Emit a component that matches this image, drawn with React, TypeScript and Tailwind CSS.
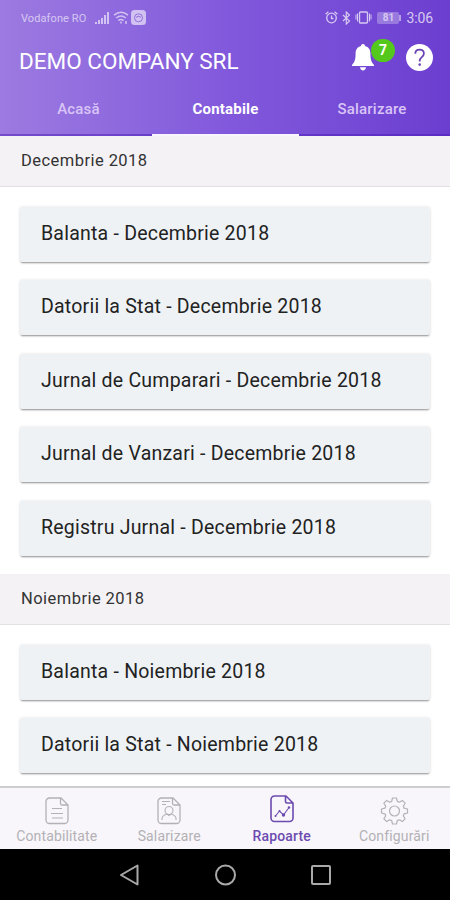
import React, { useState } from 'react';

interface ReportGroup {
  month: string;
  reports: string[];
}

const GROUPS: ReportGroup[] = [
  {
    month: 'Decembrie 2018',
    reports: ['Balanta', 'Datorii la Stat', 'Jurnal de Cumparari', 'Jurnal de Vanzari', 'Registru Jurnal'],
  },
  {
    month: 'Noiembrie 2018',
    reports: ['Balanta', 'Datorii la Stat'],
  },
];

const TOP_TABS = [
  { label: 'Acasă', pad: 'pl-[5px]' },
  { label: 'Contabile', pad: '' },
  { label: 'Salarizare', pad: 'pr-[5px]' },
];

const StatusBar: React.FC = () => (
  <div className="flex h-[35px] items-center justify-between pr-[17px] pl-[21px] text-white">
    <div className="flex items-center opacity-60">
      <span className="w-[74px] pt-[3px] text-[11px] leading-[14px] tracking-[0.1px] whitespace-nowrap">Vodafone RO</span>
      <svg width="15" height="14" viewBox="0 0 15 14" fill="currentColor">
        <path d="M0 11h2v2H0zM3 9h2v4H3zM6 7h2v6H6zM9 4h2v9H9zM12 1h2v12h-2z" />
      </svg>
      <svg className="ml-[3px]" width="16" height="14" viewBox="0 0 16 14" fill="none" stroke="currentColor" strokeWidth="1.5">
        <path d="M1 4.2Q8-1.6 15 4.2M3.2 7Q8 3 12.8 7M5.4 9.6Q8 7.6 10.6 9.6" />
        <path d="M8 10.5v2M13 10v3" />
      </svg>
      <svg className="ml-[2px]" width="15" height="15" viewBox="0 0 15 15">
        <rect width="15" height="15" rx="3.5" fill="currentColor" />
        <circle cx="7.5" cy="7.8" r="4" fill="none" stroke="#8d67d8" strokeWidth="0.9" />
        <path d="M5.2 7.2q2.3-1.8 4.6 0" fill="none" stroke="#8d67d8" />
      </svg>
    </div>
    <div className="flex items-center opacity-70">
      <svg width="13" height="13" viewBox="0 0 13 13" fill="none" stroke="currentColor" strokeWidth="1.3">
        <circle cx="6.5" cy="7" r="4.8" />
        <path d="M6.5 4.5V7.5H8.5M.6 3.2 3.4.8M12.4 3.2 9.6.8" />
      </svg>
      <svg className="ml-1" width="9" height="14" viewBox="0 0 9 14" fill="none" stroke="currentColor" strokeWidth="1.2">
        <path d="M1 4l6.5 6L4.3 13V1l3.2 3L1 10" />
      </svg>
      <svg className="ml-1" width="17" height="13" viewBox="0 0 17 13" fill="none" stroke="currentColor" strokeWidth="1.4">
        <rect x="4.5" y="1" width="8" height="11" rx="1" />
        <path d="M1 3.5v5M2.5 2.5v8M14.5 2.5v8M16 3.5v5" strokeWidth="1" />
      </svg>
      <span className="ml-[5px] flex h-[12px] w-[22px] items-center justify-center rounded-[2px] bg-white/40 text-[10px] leading-none font-bold">
        81
      </span>
      <span className="h-[6px] w-[2px] bg-white/70" />
      <span className="ml-[5px] text-[14px] leading-none tracking-[-0.1px]">3:06</span>
    </div>
  </div>
);

const BellIcon: React.FC = () => (
  <svg width="22" height="27" viewBox="0 0 22 27" fill="currentColor">
    <path d="M11 0c-1.3 0-2 .8-2 1.9C5.3 2.7 3.6 5.6 3.6 9.5c0 5.5-.8 8.5-3.6 11.5V22h22v-1c-2.8-3-3.6-6-3.6-11.5 0-3.9-1.7-6.8-5.4-7.6C13 .8 12.3 0 11 0z" />
    <path d="M8 23.2h6c-.2 2-1.4 3.2-3 3.2s-2.8-1.2-3-3.2z" />
  </svg>
);

const HelpIcon: React.FC = () => (
  <svg width="27" height="27" viewBox="0 0 27 27">
    <circle cx="13.5" cy="13.5" r="13.5" fill="#fff" />
    <path d="M9.3 9.8c0-2.6 1.8-4.2 4.3-4.2s4.3 1.5 4.3 3.9c0 3.5-4.2 3.7-4.2 7.3v.7" fill="none" stroke="#6a43b5" strokeWidth="1.8" />
    <circle cx="13.7" cy="20.6" r="1.3" fill="#6a43b5" />
  </svg>
);

const PageOutline = () => (
  <path d="M4.5 1H16L23 8V23a3.5 3.5 0 0 1-3.5 3.5h-15A3.5 3.5 0 0 1 1 23V4.5A3.5 3.5 0 0 1 4.5 1zM15.5 1v5.5A1.5 1.5 0 0 0 17 8h6" />
);

const DocumentIcon = () => (
  <svg width="24" height="28" viewBox="0 0 24 28" fill="none" stroke="currentColor" strokeWidth="1.3">
    <PageOutline />
    <path d="M7 11.5h10M6 16.5h12M7 21h11" strokeWidth="1" />
  </svg>
);

const PayrollIcon = () => (
  <svg width="24" height="28" viewBox="0 0 24 28" fill="none" stroke="currentColor" strokeWidth="1.3">
    <PageOutline />
    <g strokeWidth="1.1">
      <path d="M5 4.5h8M5 7.5h4" />
      <circle cx="12" cy="13.5" r="4" />
      <path d="M5 23v-1.5c0-2.5 2-3.5 5-4.5l2 1.5 2-1.5c3 1 5 2 5 4.5V23" />
    </g>
  </svg>
);

const ReportsIcon = () => (
  <svg width="24" height="28" viewBox="0 0 24 28" fill="none" stroke="currentColor" strokeWidth="1.6">
    <PageOutline />
    <path d="M5.5 21l4-5 4 4 5.5-7.5" strokeWidth="1.1" />
    <g fill="currentColor" stroke="none">
      <circle cx="5.5" cy="21" r="1" />
      <circle cx="9.5" cy="16" r="1" />
      <circle cx="13.5" cy="20" r="1.7" />
      <circle cx="19" cy="12.5" r="1.2" />
    </g>
  </svg>
);

const SettingsIcon = () => (
  <svg width="29" height="28" viewBox="-14.5 -14 29 28" fill="none" stroke="currentColor" strokeWidth="1.2" strokeLinejoin="round">
    <path d="M-2-13H2L2.8-9.6 4.8-8.8 7.8-10.6 10.6-7.8 8.8-4.8 9.6-2.8 13-2V2L9.6 2.8 8.8 4.8 10.6 7.8 7.8 10.6 4.8 8.8 2.8 9.6 2 13H-2L-2.8 9.6-4.8 8.8-7.8 10.6-10.6 7.8-8.8 4.8-9.6 2.8-13 2V-2L-9.6-2.8-8.8-4.8-10.6-7.8-7.8-10.6-4.8-8.8-2.8-9.6z" />
    <circle r="5" />
  </svg>
);

const BOTTOM_TABS = [
  { label: 'Contabilitate', icon: <DocumentIcon /> },
  { label: 'Salarizare', icon: <PayrollIcon /> },
  { label: 'Rapoarte', icon: <ReportsIcon /> },
  { label: 'Configurări', icon: <SettingsIcon /> },
];

const App: React.FC = () => {
  const [topTab, setTopTab] = useState('Contabile');
  const [bottomTab, setBottomTab] = useState('Rapoarte');

  return (
    <div className="flex h-[900px] w-[450px] flex-col overflow-hidden bg-white font-[Roboto,sans-serif]">
      <header className="flex h-[136px] shrink-0 flex-col bg-linear-to-r from-[#9c7ae0] via-[#8259dc] to-[#6c3ed0]">
        <StatusBar />
        <div className="flex h-[49px] items-center justify-between pr-[17px] pl-[19px] text-white">
          <h1 className="pt-[5px] text-[22.5px]">DEMO COMPANY SRL</h1>
          <div className="flex items-center pb-[5px]">
            <button className="relative mr-[32px]">
              <BellIcon />
              <span className="absolute -top-[5px] left-[19px] flex h-[23px] w-[24px] items-center justify-center rounded-full bg-[#55c81e] text-[14px] font-bold">
                7
              </span>
            </button>
            <button>
              <HelpIcon />
            </button>
          </div>
        </div>
        <nav className="grid h-[52px] grid-cols-[152px_147px_151px]">
          {TOP_TABS.map(({ label, pad }) => (
            <button
              key={label}
              onClick={() => setTopTab(label)}
              className={`border-b-2 pt-px text-[15px] tracking-[0.2px] ${pad} ${topTab === label ? 'border-[#f8f6fc] font-bold text-white' : 'border-[#4a1bb5]/50 font-medium text-[#d9c4f7]'}`}
            >
              {label}
            </button>
          ))}
        </nav>
      </header>

      <main className="min-h-0 flex-1 overflow-hidden">
        {GROUPS.map(group => (
          <section key={group.month}>
            <h2 className="flex h-[51px] items-center border-b border-[#e2e0e3] bg-[#f4f2f5] pl-[21px] text-[16.5px] tracking-[0.45px] text-[#333]">
              {group.month}
            </h2>
            <div className="flex flex-col gap-[18.5px] px-5 pt-[19.5px] pb-[18.5px]">
              {group.reports.map(report => (
                <button
                  key={report}
                  className="flex h-[55px] w-full items-center rounded-[2px] bg-[#eef2f5] pb-px pl-[21px] text-left text-[19.5px] tracking-[0.22px] text-[#222] shadow-[0_2px_2px_-1px_rgba(0,0,0,0.4),0_0_3px_rgba(0,0,0,0.13)]"
                >
                  {report} - {group.month}
                </button>
              ))}
            </div>
          </section>
        ))}
      </main>

      <nav className="grid h-[63px] shrink-0 grid-cols-4 border-t-2 border-[#cdcccf] bg-[#f8f6fa]">
        {BOTTOM_TABS.map(tab => {
          const active = bottomTab === tab.label;
          return (
            <button
              key={tab.label}
              onClick={() => setBottomTab(tab.label)}
              className={`flex flex-col items-center justify-end pb-[4px] pl-[1px] ${active ? 'text-[#6c4bb0]' : 'text-[#b3b1b5]'}`}
            >
              <span className={active ? 'mb-[4px]' : 'mb-[2px]'}>{tab.icon}</span>
              <span className={`text-[14px] leading-[18px] tracking-[0.15px] ${active ? 'font-medium' : ''}`}>{tab.label}</span>
            </button>
          );
        })}
      </nav>

      <footer className="flex h-[51px] shrink-0 items-center justify-center gap-[75px] bg-black text-[#a9a9a9]">
        <svg width="21" height="22" viewBox="0 0 21 22" fill="none" stroke="currentColor" strokeWidth="2" strokeLinejoin="round">
          <path d="M18.5 1.5v19L2 11z" />
        </svg>
        <svg width="21" height="22" viewBox="0 0 21 22" fill="none" stroke="currentColor" strokeWidth="2">
          <circle cx="10.5" cy="11" r="9.5" />
        </svg>
        <svg width="20" height="20" viewBox="0 0 20 20" fill="none" stroke="currentColor" strokeWidth="2">
          <rect x="1" y="1" width="18" height="18" rx="1" />
        </svg>
      </footer>
    </div>
  );
};

export default App;
